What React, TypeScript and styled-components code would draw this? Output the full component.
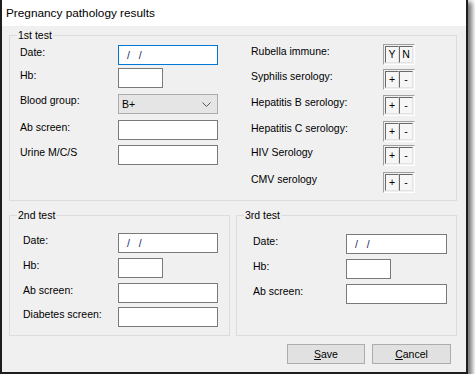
import * as React from 'react';
import styled, { createGlobalStyle } from 'styled-components';

// Windows-style "Pregnancy pathology results" dialog

const GlobalStyle = createGlobalStyle`
  html, body {
    margin: 0;
    padding: 0;
    background: #fff;
  }
  body {
    font-family: "Liberation Sans", Arial, sans-serif;
    color: #000;
  }
`;

const Dialog = styled.div`
  width: 464px;
  height: 372px;
  background: #f0f0f0;
  border: 2px solid #1e1e1e;
  border-top: 0;
  box-shadow: 3px 3px 5px 1px rgba(0, 0, 0, 0.55);
  display: flex;
  flex-direction: column;
`;

const TitleBar = styled.div`
  height: 26px;
  flex: none;
  background: #fff;
  padding-left: 4px;
  display: flex;
  align-items: center;
  font-size: 11.8px;
`;

const Body = styled.div`
  flex: 1;
  padding: 3px 9px 0 7px;
  display: flex;
  flex-direction: column;
  font-size: 10.5px;
`;

const Group = styled.fieldset`
  margin: 0;
  padding: 0;
  min-width: 0;
  border: 1px solid #dcdcdc;
`;

const Legend = styled.legend`
  margin-left: 7px;
  padding: 0 1px;
  line-height: 13px;
  font-size: 10.5px;
`;

const FirstInner = styled.div`
  display: flex;
  align-items: flex-start;
  padding: 2px 0 7px 10px;
`;

const FieldGrid = styled.div<{ $cols: string; $rows: string; $top?: number }>`
  display: grid;
  grid-template-columns: ${p => p.$cols};
  grid-template-rows: ${p => p.$rows};
  align-items: start;
  padding-top: ${p => p.$top ?? 0}px;
`;

const GroupInner = styled.div<{ $left: number }>`
  padding: 11px 0 8px ${p => p.$left}px;
`;

const SerologyGrid = styled(FieldGrid)`
  margin-left: 33px;
`;

const Label = styled.div`
  line-height: 13px;
  padding-top: 1px;
  white-space: nowrap;
`;

const TextBox = styled.div<{ $w: number; $focus?: boolean }>`
  box-sizing: border-box;
  width: ${p => p.$w}px;
  height: 20px;
  background: #fff;
  border: 1px solid ${p => (p.$focus ? '#0078d7' : '#7a7a7a')};
  padding-left: 8px;
  line-height: 18px;
  white-space: pre;
  color: #1a1a60;
`;

const Combo = styled.div`
  box-sizing: border-box;
  width: 100px;
  height: 20px;
  background: #e5e5e5;
  border: 1px solid #adadad;
  display: flex;
  align-items: center;
  justify-content: space-between;
  padding: 0 6px 0 3px;
  margin-top: 1px;
`;

const Pair = styled.div`
  display: flex;
  width: fit-content;
  padding: 1px;
  border: 1px solid;
  border-color: #a0a0a0 #fff #fff #a0a0a0;
`;

const Key = styled.div`
  box-sizing: border-box;
  width: 14px;
  height: 17px;
  border: 1px solid;
  border-color: #6a6a6a #e3e3e3 #e3e3e3 #6a6a6a;
  background: #f6f6f6;
  display: flex;
  align-items: flex-end;
  justify-content: center;
  padding-bottom: 1px;
  font-size: 10.5px;
  line-height: 13px;
`;

const BottomRow = styled.div`
  display: grid;
  grid-template-columns: 221px 1fr;
  gap: 6px;
  margin-top: 8px;
`;

const Actions = styled.div`
  display: flex;
  justify-content: flex-end;
  gap: 7px;
  margin-top: 8px;
  padding-right: 6px;
`;

const Button = styled.button<{ $w: number }>`
  box-sizing: border-box;
  width: ${p => p.$w}px;
  height: 20px;
  background: #e1e1e1;
  border: 1px solid #adadad;
  font-family: inherit;
  font-size: 10.5px;
  color: #000;
  padding: 0;
`;

const Chevron = () => (
  <svg width="9" height="5" viewBox="0 0 9 5">
    <polyline points="0.5,0.5 4.5,4.5 8.5,0.5" fill="none" stroke="#555" strokeWidth="1" />
  </svg>
);

const Toggle = ({ a, b }: { a: string; b: string }) => (
  <Pair>
    <Key>{a}</Key>
    <Key>{b}</Key>
  </Pair>
);

const serology = [
  { label: 'Rubella immune:', a: 'Y', b: 'N' },
  { label: 'Syphilis serology:', a: '+', b: '-' },
  { label: 'Hepatitis B serology:', a: '+', b: '-' },
  { label: 'Hepatitis C serology:', a: '+', b: '-' },
  { label: 'HIV Serology', a: '+', b: '-' },
  { label: 'CMV serology', a: '+', b: '-' },
];

const EMPTY_DATE = '/   /';

export default function App() {
  return (
    <>
      <GlobalStyle />
      <Dialog>
        <TitleBar>Pregnancy pathology results</TitleBar>
        <Body>
          <Group>
            <Legend>1st test</Legend>
            <FirstInner>
              <FieldGrid $cols="98px 100px" $rows="23px 25px 27px 25px 20px" $top={1}>
                <Label>Date:</Label>
                <TextBox $w={100} $focus>{EMPTY_DATE}</TextBox>
                <Label>Hb:</Label>
                <TextBox $w={45} />
                <Label>Blood group:</Label>
                <Combo>
                  <span>B+</span>
                  <Chevron />
                </Combo>
                <Label>Ab screen:</Label>
                <TextBox $w={100} />
                <Label>Urine M/C/S</Label>
                <TextBox $w={100} />
              </FieldGrid>
              <SerologyGrid $cols="132px auto" $rows="25px 26px 26px 24px 27px 21px">
                {serology.map(s => (
                  <React.Fragment key={s.label}>
                    <Label>{s.label}</Label>
                    <Toggle a={s.a} b={s.b} />
                  </React.Fragment>
                ))}
              </SerologyGrid>
            </FirstInner>
          </Group>

          <BottomRow>
            <Group>
              <Legend>2nd test</Legend>
              <GroupInner $left={13}>
                <FieldGrid $cols="95px 100px" $rows="25px 25px 24px 20px">
                  <Label>Date:</Label>
                  <TextBox $w={100}>{EMPTY_DATE}</TextBox>
                  <Label>Hb:</Label>
                  <TextBox $w={45} />
                  <Label>Ab screen:</Label>
                  <TextBox $w={100} />
                  <Label>Diabetes screen:</Label>
                  <TextBox $w={100} />
                </FieldGrid>
              </GroupInner>
            </Group>
            <Group>
              <Legend>3rd test</Legend>
              <GroupInner $left={16}>
                <FieldGrid $cols="93px 101px" $rows="25px 25px 20px" $top={1}>
                  <Label>Date:</Label>
                  <TextBox $w={101}>{EMPTY_DATE}</TextBox>
                  <Label>Hb:</Label>
                  <TextBox $w={45} />
                  <Label>Ab screen:</Label>
                  <TextBox $w={101} />
                </FieldGrid>
              </GroupInner>
            </Group>
          </BottomRow>

          <Actions>
            <Button $w={78}>
              <u>S</u>ave
            </Button>
            <Button $w={79}>
              <u>C</u>ancel
            </Button>
          </Actions>
        </Body>
      </Dialog>
    </>
  );
}
